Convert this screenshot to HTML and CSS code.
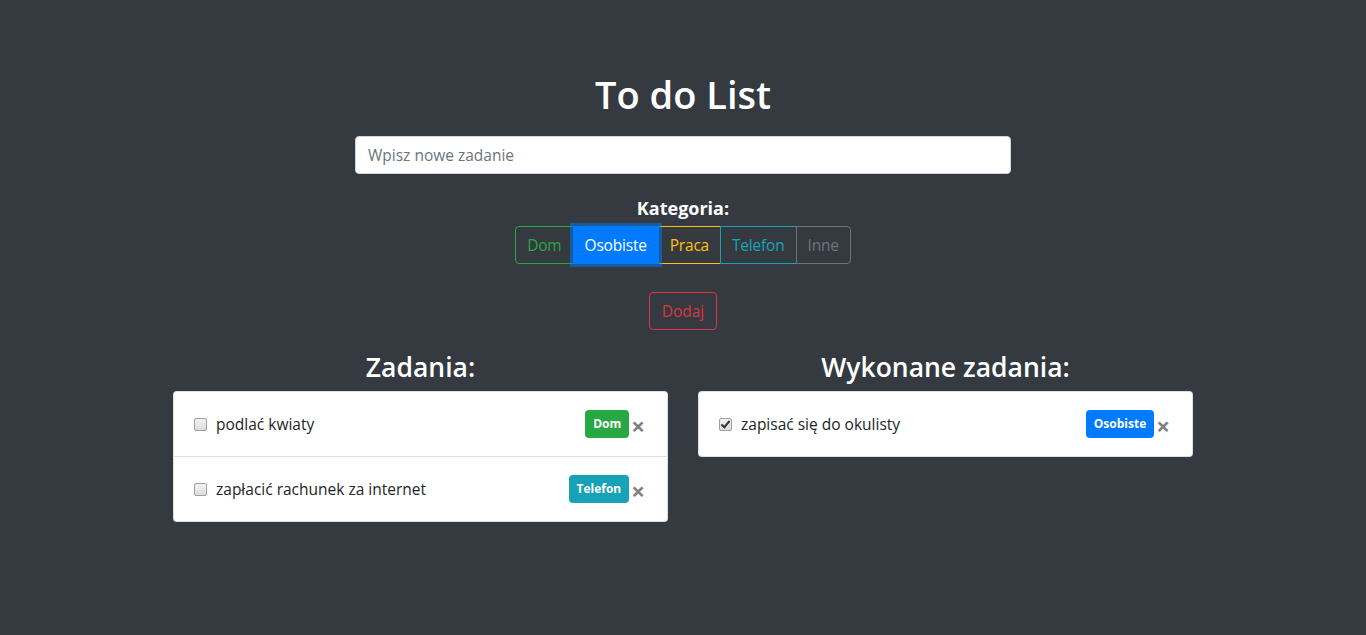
FILE: index.html
```html
<!DOCTYPE html>
<html lang="pl">
<head>
<meta charset="utf-8">
<title>To do List</title>
<link rel="stylesheet" href="styles.css">
</head>
<body>
<div class="app">
  <h1 class="title">To do List</h1>
  <input class="task-input" type="text" placeholder="Wpisz nowe zadanie">
  <div class="cat-label">Kategoria:</div>
  <div class="btn-group">
    <button class="cat cat-dom">Dom</button>
    <button class="cat cat-osobiste active">Osobiste</button>
    <button class="cat cat-praca">Praca</button>
    <button class="cat cat-telefon">Telefon</button>
    <button class="cat cat-inne">Inne</button>
  </div>
  <button class="add-btn">Dodaj</button>
  <div class="lists">
    <section class="list-col">
      <h2 class="list-title">Zadania:</h2>
      <ul class="card">
        <li class="item">
          <input type="checkbox" class="check">
          <span class="item-text">podlać kwiaty</span>
          <span class="badge badge-dom">Dom</span>
          <span class="close">×</span>
        </li>
        <li class="item">
          <input type="checkbox" class="check">
          <span class="item-text">zapłacić rachunek za internet</span>
          <span class="badge badge-telefon">Telefon</span>
          <span class="close">×</span>
        </li>
      </ul>
    </section>
    <section class="list-col">
      <h2 class="list-title">Wykonane zadania:</h2>
      <ul class="card">
        <li class="item">
          <input type="checkbox" class="check" checked>
          <span class="item-text">zapisać się do okulisty</span>
          <span class="badge badge-osobiste">Osobiste</span>
          <span class="close">×</span>
        </li>
      </ul>
    </section>
  </div>
</div>
</body>
</html>
```
FILE: styles.css
```css
* { box-sizing: border-box; }
html, body { margin: 0; padding: 0; }
body {
  background: #343a40;
  font-family: "Open Sans", "Noto Sans", sans-serif;
  color: #fff;
  min-height: 635px;
}
.app {
  display: flex;
  flex-direction: column;
  align-items: center;
  padding-top: 70px;
}
.title {
  margin: 0;
  font-size: 38px;
  font-weight: 600;
  line-height: 48px;
}
.task-input {
  margin-top: 18px;
  width: 656px;
  height: 38px;
  border: 1px solid #ced4da;
  border-radius: 4px;
  padding: 6px 12px;
  font-family: inherit;
  font-size: 15.5px;
  color: #495057;
  background: #fff;
}
.task-input::placeholder { color: #6c757d; }
.cat-label {
  margin-top: 20px;
  font-size: 18px;
  font-weight: 700;
  line-height: 28px;
}
.btn-group {
  display: flex;
  margin-top: 4px;
}
.cat {
  height: 38px;
  padding: 0 11px;
  background: transparent;
  border: 1px solid;
  font-family: inherit;
  font-size: 15.5px;
  letter-spacing: -0.2px;
  margin-left: -1px;
}
.cat:first-child { border-radius: 4px 0 0 4px; margin-left: 0; }
.cat:last-child { border-radius: 0 4px 4px 0; }
.cat-dom { color: #28a745; border-color: #28a745; }
.cat-osobiste { color: #007bff; border-color: #007bff; }
.cat-osobiste.active {
  background: #007bff;
  color: #fff;
  box-shadow: 0 0 0 3px rgba(0, 123, 255, 0.5);
  position: relative;
  z-index: 1;
}
.cat-praca { color: #ffc107; border-color: #ffc107; }
.cat-telefon { color: #17a2b8; border-color: #17a2b8; }
.cat-inne { color: #6c757d; border-color: #6c757d; }
.add-btn {
  margin-top: 28px;
  height: 38px;
  padding: 0 12px;
  background: transparent;
  color: #dc3545;
  border: 1px solid #dc3545;
  border-radius: 4px;
  font-family: inherit;
  font-size: 15.5px;
}
.lists {
  display: flex;
  gap: 30px;
  margin-top: 19px;
  align-items: flex-start;
}
.list-col {
  width: 495px;
  display: flex;
  flex-direction: column;
  align-items: center;
}
.list-title {
  margin: 0 0 6px;
  font-size: 26.5px;
  font-weight: 600;
  line-height: 36px;
}
.card {
  list-style: none;
  margin: 0;
  padding: 0;
  width: 100%;
  background: #fff;
  border-radius: 4px;
  border: 1px solid rgba(0,0,0,.125);
}
.item {
  display: flex;
  align-items: center;
  height: 64px;
  padding: 0 22px 0 20px;
  color: #212529;
  font-size: 15.5px;
}
.item + .item { border-top: 1px solid rgba(0,0,0,.125); height: 65px; }
.check {
  appearance: none;
  -webkit-appearance: none;
  margin: 0 9px 0 0;
  width: 13px;
  height: 13px;
  border: 1px solid #a0a0a0;
  border-radius: 2px;
  background: linear-gradient(#f2f2f2, #dcdcdc);
  position: relative;
  flex: none;
}
.check:checked::after {
  content: "";
  position: absolute;
  left: 3px;
  top: 0px;
  width: 3px;
  height: 7px;
  border: solid #333;
  border-width: 0 2px 2px 0;
  transform: rotate(40deg);
}
.item-text { flex: 1; }
.badge {
  color: #fff;
  font-size: 12px;
  font-weight: 700;
  border-radius: 4px;
  padding: 0 8px;
  height: 28px;
  line-height: 28px;
}
.badge-dom { background: #28a745; }
.badge-telefon { background: #17a2b8; }
.badge-osobiste { background: #007bff; }
.close {
  color: #808080;
  font-size: 24px;
  font-weight: 700;
  line-height: 1;
  margin-left: 2px;
  margin-top: 4px;
}
```
